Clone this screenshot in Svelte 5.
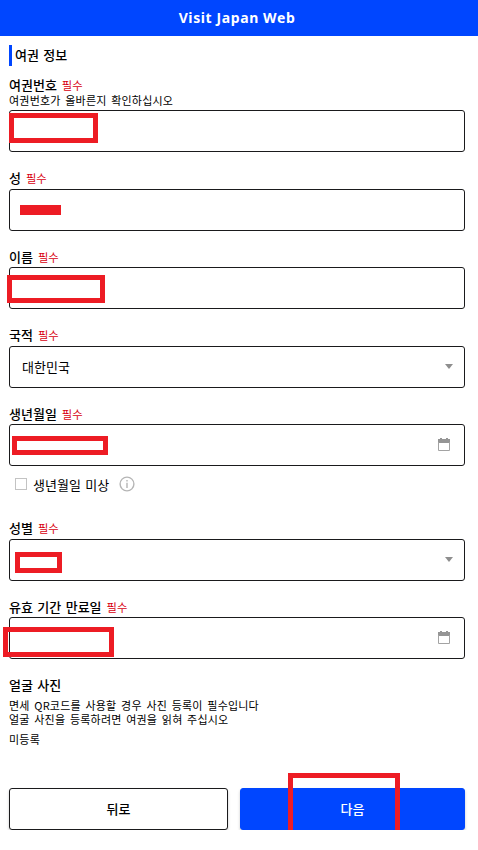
<script lang="ts">
  type Mark = { x: number; y: number; w: number; h: number; solid?: boolean };
  type Field = {
    id: string;
    label: string;
    hint?: string;
    kind: 'text' | 'select' | 'date';
    value?: string;
    unknown?: string;
    mark?: Mark;
  };

  // mark offsets are relative to the top left corner of the control
  const fields: Field[] = [
    {
      id: 'number',
      label: '여권번호',
      hint: '여권번호가 올바른지 확인하십시오',
      kind: 'text',
      mark: { x: 0, y: 3, w: 89, h: 30 },
    },
    { id: 'surname', label: '성', kind: 'text', mark: { x: 11, y: 16, w: 41, h: 10, solid: true } },
    { id: 'given', label: '이름', kind: 'text', mark: { x: -2, y: 8, w: 98, h: 28 } },
    { id: 'nationality', label: '국적', kind: 'select', value: '대한민국' },
    {
      id: 'birth',
      label: '생년월일',
      kind: 'date',
      unknown: '생년월일 미상',
      mark: { x: 3, y: 12, w: 96, h: 19 },
    },
    { id: 'sex', label: '성별', kind: 'select', mark: { x: 6, y: 13, w: 47, h: 21 } },
    { id: 'expiry', label: '유효 기간 만료일', kind: 'date', mark: { x: -6, y: 10, w: 111, h: 30 } },
  ];
</script>

<svelte:head>
  <title>Visit Japan Web</title>
</svelte:head>

<header class="header">Visit Japan Web</header>

<main class="page">
  <h1 class="section-title">여권 정보</h1>

  {#each fields as field (field.id)}
    <section class="field">
      <div class="field__label">
        <span class="label">{field.label}</span>
        <span class="required">필수</span>
      </div>
      {#if field.hint}
        <p class="field__hint">{field.hint}</p>
      {/if}

      <div class="control">
        <span class="control__value">{field.value ?? ''}</span>
        {#if field.kind === 'select'}
          <svg class="arrow" width="8" height="5" viewBox="0 0 8 5">
            <path d="M0 0h8L4 5z" fill="#8e8e8e" />
          </svg>
        {:else if field.kind === 'date'}
          <svg class="calendar" width="12" height="13" viewBox="0 0 12 13">
            <path d="M2 0h2v1h4V0h2v1h2v4H0V1h2z" fill="#959595" />
            <path d="M.5 4v8.5h11V4" fill="none" stroke="#a3a3a3" />
          </svg>
        {/if}
        {#if field.mark}
          <span
            class="mark"
            class:mark--solid={field.mark.solid}
            style="left: {field.mark.x - 1}px; top: {field.mark.y - 1}px; width: {field.mark.w}px; height: {field.mark.h}px"
          ></span>
        {/if}
      </div>

      {#if field.unknown}
        <div class="unknown">
          <span class="checkbox"></span>
          <span>{field.unknown}</span>
          <svg class="info" width="16" height="16" viewBox="0 0 16 16">
            <circle cx="8" cy="8" r="6.9" fill="none" stroke="#b5b5b5" stroke-width="1.4" />
            <path d="M7.3 4h1.4v1.5H7.3zM7.3 6.8h1.4V12H7.3z" fill="#b5b5b5" />
          </svg>
        </div>
      {/if}
    </section>
  {/each}

  <section class="photo">
    <h2 class="label photo__title">얼굴 사진</h2>
    <p>면세 QR코드를 사용할 경우 사진 등록이 필수입니다</p>
    <p>얼굴 사진을 등록하려면 여권을 읽혀 주십시오</p>
    <p class="photo__status">미등록</p>
  </section>

  <div class="actions">
    <button class="btn btn--back" type="button">뒤로</button>
    <button class="btn btn--next" type="button">다음<span class="mark mark--next"></span></button>
  </div>
</main>

<style>
  :global(body) {
    background: #fff;
    color: #000;
    font-family: 'Noto Sans', 'Noto Sans CJK KR', sans-serif;
  }

  h1, h2, p { margin: 0; }

  .header {
    height: 36px;
    background: #0046ff;
    color: #fff;
    font-size: 14px;
    font-weight: 700;
    line-height: 35px;
    letter-spacing: 0.6px;
    text-align: center;
    padding-right: 4px;
    box-sizing: border-box;
  }

  .page {
    padding: 9px 13px 0 9px;
  }

  .section-title {
    height: 21px;
    margin-bottom: 8px;
    padding-left: 3px;
    border-left: 3px solid #0046ff;
    font-family: 'Noto Sans CJK KR', sans-serif;
    font-size: 13px;
    font-weight: 500;
    line-height: 20px;
    word-spacing: 1.5px;
  }

  /* ── Fields ── */
  .field {
    margin-bottom: 15.5px;
    font-family: 'Noto Sans CJK KR', sans-serif;
  }

  .field__label {
    display: flex;
    align-items: center;
    gap: 5px;
    height: 21px;
  }

  .label {
    font-size: 13px;
    font-weight: 500;
    line-height: 20px;
    word-spacing: 1.5px;
  }

  .required {
    color: #d8000f;
    font-size: 11.3px;
    line-height: 20px;
  }

  .field__hint {
    height: 15px;
    font-size: 11px;
    line-height: 11px;
    letter-spacing: 0.2px;
    word-spacing: 2px;
  }

  .control {
    position: relative;
    display: flex;
    align-items: center;
    justify-content: space-between;
    box-sizing: border-box;
    height: 42px;
    padding: 0 11px 0 12px;
    border: 1px solid #1a1a1c;
    border-radius: 3px;
  }

  .control__value {
    font-size: 13px;
    line-height: 20px;
  }

  .calendar {
    margin: 0 3px 2px 0;
  }

  .mark {
    position: absolute;
    z-index: 1;
    box-sizing: border-box;
    border: 5px solid #ed1c24;
  }

  .mark--solid { background: #ed1c24; }

  .unknown {
    display: flex;
    align-items: center;
    height: 36px;
    padding-left: 6px;
    font-size: 13px;
    word-spacing: 1.5px;
  }

  .checkbox {
    box-sizing: border-box;
    width: 12px;
    height: 12px;
    margin-right: 6px;
    border: 1px solid #c3c3c3;
  }

  .info { margin-left: 10px; }

  /* ── Face photo ── */
  .photo {
    font-family: 'Noto Sans CJK KR', sans-serif;
    font-size: 11px;
    line-height: 14px;
    letter-spacing: 0.2px;
    word-spacing: 2px;
  }

  .photo__title {
    height: 23px;
    letter-spacing: 0;
  }

  .photo__status { margin-top: 6px; }

  /* ── Actions ── */
  .actions {
    display: grid;
    grid-template-columns: 219px 225px;
    gap: 12px;
    margin-top: 42px;
  }

  .btn {
    position: relative;
    height: 42px;
    padding: 0;
    border: 1px solid #1a1a1c;
    border-radius: 3px;
    background: #fff;
    box-shadow: 0 2px 3px rgba(0, 0, 0, 0.22);
    color: #000;
    font-family: 'Noto Sans CJK KR', sans-serif;
    font-size: 13px;
    font-weight: 500;
  }

  .btn--next {
    border-color: #0046ff;
    background: #0046ff;
    color: #fff;
  }

  .mark--next {
    left: 47px;
    top: -16px;
    width: 112px;
    height: 65px;
  }
</style>
